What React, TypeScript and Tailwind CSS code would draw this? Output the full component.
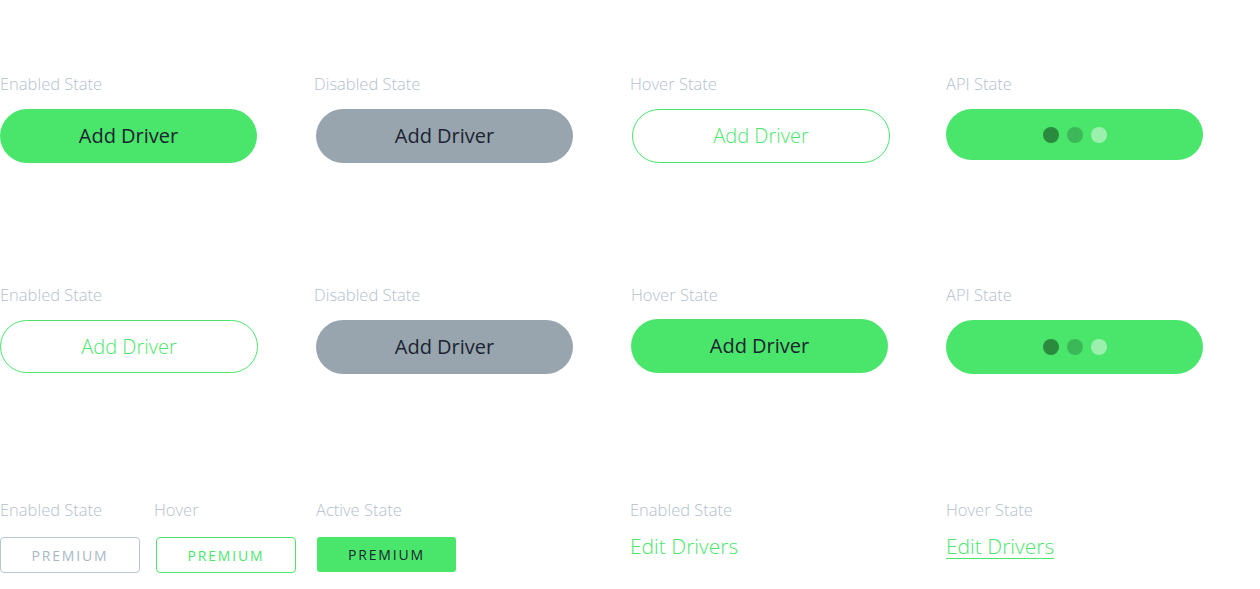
import React from 'react';

const font = { fontFamily: '"Open Sans", "Liberation Sans", sans-serif' };

const Label = ({ children }: { children: React.ReactNode }) => (
    <div className="h-5 leading-5 text-[16.5px] font-light text-[#b3c1ce] whitespace-nowrap">{children}</div>
);

const Dots = () => (
    <div className="flex items-center gap-2">
        <span className="w-4 h-4 rounded-full bg-[#2a8a3e]" />
        <span className="w-4 h-4 rounded-full bg-[#3db858]" />
        <span className="w-4 h-4 rounded-full bg-[#9bf0ae]" />
    </div>
);

const pill = 'w-[257px] rounded-full flex items-center justify-center text-[20px]';

const App = () => {
    return (
        <div className="w-[1260px] h-[589px] bg-white pt-[74px] overflow-hidden" style={font}>
            {/* row 1 */}
            <div className="grid grid-cols-[316px_316px_314px_257px]">
                <div>
                    <Label>Enabled State</Label>
                    <button className={`${pill} mt-[15px] h-[54px] bg-[#4ae66b] text-[#1b2430]`}>Add Driver</button>
                </div>
                <div>
                    <div className="-ml-[2px]"><Label>Disabled State</Label></div>
                    <button className={`${pill} mt-[15px] h-[54px] bg-[#98a5ae] text-[#1b2430]`}>Add Driver</button>
                </div>
                <div>
                    <div className="-ml-[2px]"><Label>Hover State</Label></div>
                    <button className={`${pill} w-[258px] mt-[15px] h-[54px] border border-[#4ae66b] text-[#4ae66b] font-light`}>Add Driver</button>
                </div>
                <div>
                    <Label>API State</Label>
                    <div className={`${pill} mt-[15px] h-[51px] bg-[#4ae66b]`}>
                        <Dots />
                    </div>
                </div>
            </div>

            {/* row 2 */}
            <div className="grid grid-cols-[316px_315px_315px_257px] mt-[122px]">
                <div>
                    <Label>Enabled State</Label>
                    <button className={`${pill} w-[258px] mt-[15px] h-[53px] border border-[#4ae66b] text-[#4ae66b] font-light`}>Add Driver</button>
                </div>
                <div>
                    <div className="-ml-[2px]"><Label>Disabled State</Label></div>
                    <button className={`${pill} mt-[15px] h-[54px] bg-[#98a5ae] text-[#1b2430]`}>Add Driver</button>
                </div>
                <div>
                    <Label>Hover State</Label>
                    <button className={`${pill} mt-[14px] h-[54px] bg-[#4ae66b] text-[#1b2430]`}>Add Driver</button>
                </div>
                <div>
                    <Label>API State</Label>
                    <div className={`${pill} mt-[15px] h-[54px] bg-[#4ae66b]`}>
                        <Dots />
                    </div>
                </div>
            </div>

            {/* row 3 */}
            <div className="grid grid-cols-[630px_316px_300px] mt-[126px]">
                <div className="flex gap-[16px]">
                    <div>
                        <Label>Enabled State</Label>
                        <button className="mt-[17px] w-[140px] h-[36px] rounded-[4px] border border-[#b8c6d3] text-[#a8b7c4] text-[14px] tracking-[0.13em]">PREMIUM</button>
                    </div>
                    <div>
                        <div className="-ml-[2px]"><Label>Hover</Label></div>
                        <button className="mt-[17px] w-[140px] h-[36px] rounded-[4px] border border-[#4ae66b] text-[#4ae66b] text-[14px] tracking-[0.13em]">PREMIUM</button>
                    </div>
                    <div className="ml-[5px]">
                        <div className="-ml-[1px]"><Label>Active State</Label></div>
                        <button className="mt-[17px] w-[139px] h-[35px] rounded-[3px] bg-[#4ae66b] text-[#1b2430] text-[14px] font-medium tracking-[0.13em]">PREMIUM</button>
                    </div>
                </div>
                <div>
                    <Label>Enabled State</Label>
                    <div className="mt-[12px] text-[21px] leading-7 font-light text-[#4ae66b]">Edit Drivers</div>
                </div>
                <div>
                    <Label>Hover State</Label>
                    <div className="mt-[12px] text-[21px] leading-7 font-light text-[#4ae66b] underline underline-offset-4 decoration-1">Edit Drivers</div>
                </div>
            </div>
        </div>
    );
};

export default App;
